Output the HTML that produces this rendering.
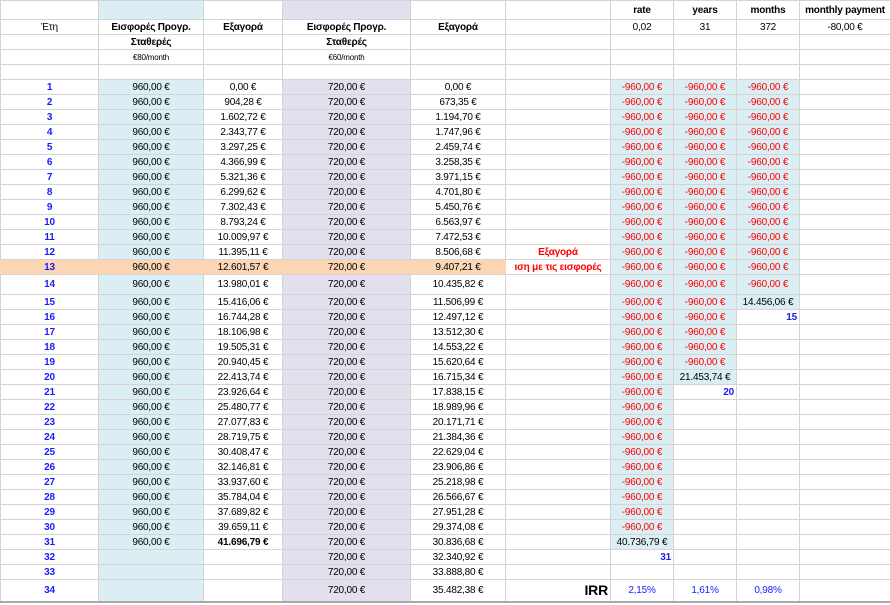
<!DOCTYPE html>
<html><head><meta charset="utf-8"><style>
html,body{margin:0;padding:0;background:#fff;width:890px;height:605px;overflow:hidden}
table{border-collapse:collapse;table-layout:fixed;width:890px;font-family:"Liberation Sans",sans-serif;font-size:10px;color:#000;letter-spacing:-0.2px}
td{border:1px solid #d4d4d4;padding:0 2px;height:14px;line-height:13px;text-align:center;white-space:nowrap;overflow:hidden}
tr.t td{height:19px;vertical-align:bottom}
tr.h14 td{height:19px;vertical-align:middle}
tr.h34 td{height:21px;vertical-align:middle}
.b{background:#daeef3}.l{background:#e4dfec}.o td{background:#fcd5b4;border-left-color:#fcd5b4;border-right-color:#fcd5b4}
.o td.b{background:#fcd5b4}
.r{color:#f00}.n{color:#1a1aff;font-weight:bold}.k{font-weight:bold}.s{font-size:8px}
.rt{text-align:right}
.bar{position:absolute;left:0;top:601px;width:890px;height:2px;background:#a8a8a8}
</style></head><body>
<table>
<colgroup><col style="width:98px"><col style="width:105px"><col style="width:79px"><col style="width:128px"><col style="width:95px"><col style="width:105px"><col style="width:63px"><col style="width:63px"><col style="width:63px"><col style="width:91px"></colgroup>
<tr style="height:19px"><td style="height:18px"></td><td class="b"></td><td></td><td class="l"></td><td></td><td></td><td class="k">rate</td><td class="k">years</td><td class="k">months</td><td class="k">monthly payment</td></tr>
<tr><td>Έτη</td><td class="k">Εισφορές Προγρ.</td><td class="k">Εξαγορά</td><td class="k">Εισφορές Προγρ.</td><td class="k">Εξαγορά</td><td></td><td>0,02</td><td>31</td><td>372</td><td>-80,00 €</td></tr>
<tr><td></td><td class="k">Σταθερές</td><td></td><td class="k">Σταθερές</td><td></td><td></td><td></td><td></td><td></td><td></td></tr>
<tr><td></td><td class="s">€80/month</td><td></td><td class="s">€60/month</td><td></td><td></td><td></td><td></td><td></td><td></td></tr>
<tr><td></td><td></td><td></td><td></td><td></td><td></td><td></td><td></td><td></td><td></td></tr>
<tr><td class="n">1</td><td class="b">960,00 €</td><td>0,00 €</td><td class="l">720,00 €</td><td>0,00 €</td><td></td><td class="b r">-960,00 €</td><td class="b r">-960,00 €</td><td class="b r">-960,00 €</td><td></td></tr>
<tr><td class="n">2</td><td class="b">960,00 €</td><td>904,28 €</td><td class="l">720,00 €</td><td>673,35 €</td><td></td><td class="b r">-960,00 €</td><td class="b r">-960,00 €</td><td class="b r">-960,00 €</td><td></td></tr>
<tr><td class="n">3</td><td class="b">960,00 €</td><td>1.602,72 €</td><td class="l">720,00 €</td><td>1.194,70 €</td><td></td><td class="b r">-960,00 €</td><td class="b r">-960,00 €</td><td class="b r">-960,00 €</td><td></td></tr>
<tr><td class="n">4</td><td class="b">960,00 €</td><td>2.343,77 €</td><td class="l">720,00 €</td><td>1.747,96 €</td><td></td><td class="b r">-960,00 €</td><td class="b r">-960,00 €</td><td class="b r">-960,00 €</td><td></td></tr>
<tr><td class="n">5</td><td class="b">960,00 €</td><td>3.297,25 €</td><td class="l">720,00 €</td><td>2.459,74 €</td><td></td><td class="b r">-960,00 €</td><td class="b r">-960,00 €</td><td class="b r">-960,00 €</td><td></td></tr>
<tr><td class="n">6</td><td class="b">960,00 €</td><td>4.366,99 €</td><td class="l">720,00 €</td><td>3.258,35 €</td><td></td><td class="b r">-960,00 €</td><td class="b r">-960,00 €</td><td class="b r">-960,00 €</td><td></td></tr>
<tr><td class="n">7</td><td class="b">960,00 €</td><td>5.321,36 €</td><td class="l">720,00 €</td><td>3.971,15 €</td><td></td><td class="b r">-960,00 €</td><td class="b r">-960,00 €</td><td class="b r">-960,00 €</td><td></td></tr>
<tr><td class="n">8</td><td class="b">960,00 €</td><td>6.299,62 €</td><td class="l">720,00 €</td><td>4.701,80 €</td><td></td><td class="b r">-960,00 €</td><td class="b r">-960,00 €</td><td class="b r">-960,00 €</td><td></td></tr>
<tr><td class="n">9</td><td class="b">960,00 €</td><td>7.302,43 €</td><td class="l">720,00 €</td><td>5.450,76 €</td><td></td><td class="b r">-960,00 €</td><td class="b r">-960,00 €</td><td class="b r">-960,00 €</td><td></td></tr>
<tr><td class="n">10</td><td class="b">960,00 €</td><td>8.793,24 €</td><td class="l">720,00 €</td><td>6.563,97 €</td><td></td><td class="b r">-960,00 €</td><td class="b r">-960,00 €</td><td class="b r">-960,00 €</td><td></td></tr>
<tr><td class="n">11</td><td class="b">960,00 €</td><td>10.009,97 €</td><td class="l">720,00 €</td><td>7.472,53 €</td><td></td><td class="b r">-960,00 €</td><td class="b r">-960,00 €</td><td class="b r">-960,00 €</td><td></td></tr>
<tr><td class="n">12</td><td class="b">960,00 €</td><td>11.395,11 €</td><td class="l">720,00 €</td><td>8.506,68 €</td><td class="r k">Εξαγορά</td><td class="b r">-960,00 €</td><td class="b r">-960,00 €</td><td class="b r">-960,00 €</td><td></td></tr>
<tr class="o"><td class="n">13</td><td>960,00 €</td><td>12.601,57 €</td><td>720,00 €</td><td>9.407,21 €</td><td class="r k" style="background:#fff;border-color:#d4d4d4">ιση με τις εισφορές</td><td class="b r" style="background:#daeef3;border-color:#d4d4d4">-960,00 €</td><td class="b r" style="background:#daeef3;border-color:#d4d4d4">-960,00 €</td><td class="b r" style="background:#daeef3;border-color:#d4d4d4">-960,00 €</td><td style="background:#fff;border-color:#d4d4d4"></td></tr>
<tr class="h14"><td class="n">14</td><td class="b">960,00 €</td><td>13.980,01 €</td><td class="l">720,00 €</td><td>10.435,82 €</td><td></td><td class="b r">-960,00 €</td><td class="b r">-960,00 €</td><td class="b r">-960,00 €</td><td></td></tr>
<tr><td class="n">15</td><td class="b">960,00 €</td><td>15.416,06 €</td><td class="l">720,00 €</td><td>11.506,99 €</td><td></td><td class="b r">-960,00 €</td><td class="b r">-960,00 €</td><td class="b">14.456,06 €</td><td></td></tr>
<tr><td class="n">16</td><td class="b">960,00 €</td><td>16.744,28 €</td><td class="l">720,00 €</td><td>12.497,12 €</td><td></td><td class="b r">-960,00 €</td><td class="b r">-960,00 €</td><td class="n rt">15</td><td></td></tr>
<tr><td class="n">17</td><td class="b">960,00 €</td><td>18.106,98 €</td><td class="l">720,00 €</td><td>13.512,30 €</td><td></td><td class="b r">-960,00 €</td><td class="b r">-960,00 €</td><td></td><td></td></tr>
<tr><td class="n">18</td><td class="b">960,00 €</td><td>19.505,31 €</td><td class="l">720,00 €</td><td>14.553,22 €</td><td></td><td class="b r">-960,00 €</td><td class="b r">-960,00 €</td><td></td><td></td></tr>
<tr><td class="n">19</td><td class="b">960,00 €</td><td>20.940,45 €</td><td class="l">720,00 €</td><td>15.620,64 €</td><td></td><td class="b r">-960,00 €</td><td class="b r">-960,00 €</td><td></td><td></td></tr>
<tr><td class="n">20</td><td class="b">960,00 €</td><td>22.413,74 €</td><td class="l">720,00 €</td><td>16.715,34 €</td><td></td><td class="b r">-960,00 €</td><td class="b">21.453,74 €</td><td></td><td></td></tr>
<tr><td class="n">21</td><td class="b">960,00 €</td><td>23.926,64 €</td><td class="l">720,00 €</td><td>17.838,15 €</td><td></td><td class="b r">-960,00 €</td><td class="n rt">20</td><td></td><td></td></tr>
<tr><td class="n">22</td><td class="b">960,00 €</td><td>25.480,77 €</td><td class="l">720,00 €</td><td>18.989,96 €</td><td></td><td class="b r">-960,00 €</td><td></td><td></td><td></td></tr>
<tr><td class="n">23</td><td class="b">960,00 €</td><td>27.077,83 €</td><td class="l">720,00 €</td><td>20.171,71 €</td><td></td><td class="b r">-960,00 €</td><td></td><td></td><td></td></tr>
<tr><td class="n">24</td><td class="b">960,00 €</td><td>28.719,75 €</td><td class="l">720,00 €</td><td>21.384,36 €</td><td></td><td class="b r">-960,00 €</td><td></td><td></td><td></td></tr>
<tr><td class="n">25</td><td class="b">960,00 €</td><td>30.408,47 €</td><td class="l">720,00 €</td><td>22.629,04 €</td><td></td><td class="b r">-960,00 €</td><td></td><td></td><td></td></tr>
<tr><td class="n">26</td><td class="b">960,00 €</td><td>32.146,81 €</td><td class="l">720,00 €</td><td>23.906,86 €</td><td></td><td class="b r">-960,00 €</td><td></td><td></td><td></td></tr>
<tr><td class="n">27</td><td class="b">960,00 €</td><td>33.937,60 €</td><td class="l">720,00 €</td><td>25.218,98 €</td><td></td><td class="b r">-960,00 €</td><td></td><td></td><td></td></tr>
<tr><td class="n">28</td><td class="b">960,00 €</td><td>35.784,04 €</td><td class="l">720,00 €</td><td>26.566,67 €</td><td></td><td class="b r">-960,00 €</td><td></td><td></td><td></td></tr>
<tr><td class="n">29</td><td class="b">960,00 €</td><td>37.689,82 €</td><td class="l">720,00 €</td><td>27.951,28 €</td><td></td><td class="b r">-960,00 €</td><td></td><td></td><td></td></tr>
<tr><td class="n">30</td><td class="b">960,00 €</td><td>39.659,11 €</td><td class="l">720,00 €</td><td>29.374,08 €</td><td></td><td class="b r">-960,00 €</td><td></td><td></td><td></td></tr>
<tr><td class="n">31</td><td class="b">960,00 €</td><td class="k">41.696,79 €</td><td class="l">720,00 €</td><td>30.836,68 €</td><td></td><td class="b">40.736,79 €</td><td></td><td></td><td></td></tr>
<tr><td class="n">32</td><td class="b"></td><td></td><td class="l">720,00 €</td><td>32.340,92 €</td><td></td><td class="n rt">31</td><td></td><td></td><td></td></tr>
<tr><td class="n">33</td><td class="b"></td><td></td><td class="l">720,00 €</td><td>33.888,80 €</td><td></td><td></td><td></td><td></td><td></td></tr>
<tr class="h34"><td class="n">34</td><td class="b"></td><td></td><td class="l">720,00 €</td><td>35.482,38 €</td><td class="rt k" style="font-size:14px">IRR</td><td class="n" style="font-weight:normal">2,15%</td><td class="n" style="font-weight:normal">1,61%</td><td class="n" style="font-weight:normal">0,98%</td><td></td></tr>
</table>
<div class="bar"></div>
</body></html>
